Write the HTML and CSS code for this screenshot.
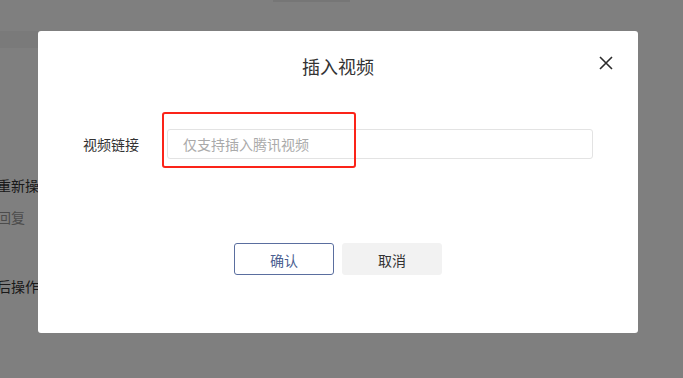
FILE: index.html
```html
<!DOCTYPE html>
<html lang="zh-CN">
<head>
<meta charset="utf-8">
<title>插入视频</title>
<link rel="stylesheet" href="styles.css">
</head>
<body>
<div class="page">
  <div class="page-top"></div>
  <div class="page-band"></div>
  <div class="page-list">
    <div class="item strong">重新操作</div>
    <div class="item muted">回复</div>
    <div class="item strong spaced">后操作你</div>
  </div>
</div>
<div class="mask">
  <div class="modal">
    <div class="modal-head">
      <h2 class="modal-title">插入视频</h2>
      <button class="modal-close" aria-label="关闭">
        <svg width="14" height="14" viewBox="0 0 14 14"><path d="M1 1L13 13M13 1L1 13" stroke="#2b2b2b" stroke-width="1.6" fill="none"/></svg>
      </button>
    </div>
    <div class="form-row">
      <label class="form-label">视频链接</label>
      <input class="form-input" type="text" placeholder="仅支持插入腾讯视频">
    </div>
    <div class="modal-foot">
      <button class="btn btn-primary">确认</button>
      <button class="btn btn-default">取消</button>
    </div>
    <div class="annot"></div>
  </div>
</div>
</body>
</html>
```

FILE: styles.css
```css
* { box-sizing: border-box; }
html, body { margin: 0; padding: 0; }
body {
  width: 683px;
  height: 378px;
  overflow: hidden;
  background: #fff;
  font-family: "Noto Sans CJK SC", "Noto Sans", sans-serif;
  position: relative;
}
.page { height: 378px; }
.page-top {
  width: 77px;
  height: 2px;
  margin-left: 273px;
  background: #ececec;
}
.page-band {
  margin-top: 29px;
  width: 40px;
  height: 17px;
  background: #f4f4f4;
}
.page-list {
  margin-left: -3px;
  padding-top: 127px;
}
.item {
  font-size: 14px;
  line-height: 20px;
  white-space: nowrap;
}
.item.strong { color: #333; }
.item.muted { color: #999; margin-top: 12px; }
.item.spaced { margin-top: 49px; }

.mask {
  position: absolute;
  inset: 0;
  background: rgba(0, 0, 0, 0.5);
}
.modal {
  position: absolute;
  left: 38px;
  top: 31px;
  width: 600px;
  height: 302px;
  background: #fff;
  border-radius: 3px;
  padding: 21px 45px 58px;
  display: flex;
  flex-direction: column;
}
.modal-head {
  display: flex;
  justify-content: center;
}
.modal-title {
  margin: 0;
  font-size: 18px;
  line-height: 28px;
  font-weight: normal;
  color: #333;
}
.modal-close {
  position: absolute;
  right: 25px;
  top: 25px;
  width: 14px;
  height: 14px;
  padding: 0;
  border: 0;
  background: none;
  display: flex;
}
.form-row {
  margin-top: 49px;
  display: flex;
  align-items: center;
}
.form-label {
  font-size: 14px;
  color: #333;
  margin-right: 28px;
  line-height: 20px;
  white-space: nowrap;
}
.form-input {
  flex: 1;
  height: 30px;
  border: 1px solid #e3e3e3;
  border-radius: 3px;
  padding: 0 15px;
  font-family: inherit;
  font-size: 14px;
  color: #333;
  outline: none;
}
.form-input::placeholder { color: #aaa; }
.modal-foot {
  margin-top: 84px;
  display: flex;
  justify-content: center;
  gap: 8px;
}
.btn {
  width: 100px;
  height: 32px;
  border-radius: 3px;
  font-family: inherit;
  font-size: 14px;
  padding: 2px 0 0;
  cursor: pointer;
}
.btn-primary {
  background: #fff;
  border: 1px solid #5a6e9f;
  color: #4b5f91;
}
.btn-default {
  background: #f2f2f2;
  border: 1px solid #f2f2f2;
  color: #333;
}
.annot {
  position: absolute;
  left: 124px;
  top: 81px;
  width: 194px;
  height: 56px;
  border: 2px solid #fb2419;
  border-radius: 3px;
}
```
